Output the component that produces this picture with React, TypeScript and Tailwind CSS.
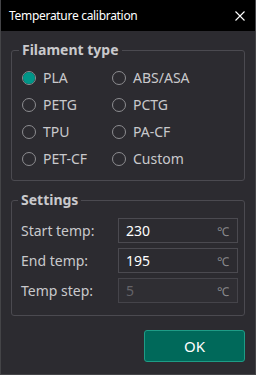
import { useState } from "react";

const FILAMENTS = ["PLA", "ABS/ASA", "PETG", "PCTG", "TPU", "PA-CF", "PET-CF", "Custom"];

type Row = { label: string; value: string; disabled?: boolean };

const ROWS: Row[] = [
  { label: "Start temp:", value: "230" },
  { label: "End temp:", value: "195" },
  { label: "Temp step:", value: "5", disabled: true },
];

function Radio({ checked }: { checked: boolean }) {
  return (
    <span className="flex h-[14px] w-[14px] shrink-0 items-center justify-center rounded-full border border-[#8d8d90]">
      {checked && <span className="h-[12px] w-[12px] rounded-full bg-[#009688]" />}
    </span>
  );
}

export default function App() {
  const [selected, setSelected] = useState("PLA");

  return (
    <div
      className="flex h-[375px] w-[256px] flex-col border-x border-b border-[#444447] bg-[#2c2b30] text-[#c9c9cc]"
      style={{ fontFamily: '"Noto Sans", "Open Sans", sans-serif' }}
    >
      {/* title bar */}
      <div className="flex h-[31px] shrink-0 items-center justify-between bg-black pl-[8px] pr-[10px] text-[12px] tracking-[-0.3px] text-white">
        <span>Temperature calibration</span>
        <svg width="10" height="10" viewBox="0 0 10 10" className="text-white">
          <path d="M0.5 0.5 L9.5 9.5 M9.5 0.5 L0.5 9.5" stroke="currentColor" strokeWidth="1.1" />
        </svg>
      </div>

      {/* filament type */}
      <fieldset className="mx-[10px] mt-[11px] rounded-[3px] border border-[#4b4a50] px-0 pb-[8px]">
        <legend className="ml-[7px] px-[3px] text-[14px] font-bold leading-[16px] text-[#c9c9cc]">
          Filament type
        </legend>
        <div className="grid grid-cols-[90px_1fr] pl-[10px] pt-[6px]">
          {FILAMENTS.map((f) => (
            <label
              key={f}
              onClick={() => setSelected(f)}
              className="flex h-[27px] cursor-pointer items-center gap-[7px] text-[14px]"
            >
              <Radio checked={selected === f} />
              <span>{f}</span>
            </label>
          ))}
        </div>
      </fieldset>

      {/* settings */}
      <fieldset className="mx-[10px] mt-[11px] rounded-[3px] border border-[#4b4a50] px-0 pb-[12px]">
        <legend className="ml-[6px] px-[3px] text-[14px] font-bold leading-[16px] text-[#c9c9cc]">
          Settings
        </legend>
        <div className="flex flex-col gap-[5px] pl-[9px] pt-[10px]">
          {ROWS.map((r) => (
            <div key={r.label} className="flex items-center">
              <span className="w-[97px] text-[14px]">{r.label}</span>
              <div
                className={
                  r.disabled
                    ? "flex h-[25px] w-[120px] items-center justify-between border border-[#45444a] bg-[#2f2e33] pl-[7px] pr-[8px]"
                    : "flex h-[25px] w-[120px] items-center justify-between border border-[#4b4a50] pl-[7px] pr-[8px]"
                }
              >
                <span className={r.disabled ? "text-[14px] text-[#646368]" : "text-[14px] text-white"}>
                  {r.value}
                </span>
                <span className="pt-[3px] text-[12px] text-[#8a8a8e]">℃</span>
              </div>
            </div>
          ))}
        </div>
      </fieldset>

      {/* footer */}
      <div className="mt-[14px] flex justify-end pr-[10px]">
        <button className="h-[32px] w-[101px] rounded-[3px] border border-[#1e9c86] bg-[#00695a] text-[15px] font-normal text-white">
          OK
        </button>
      </div>
    </div>
  );
}
